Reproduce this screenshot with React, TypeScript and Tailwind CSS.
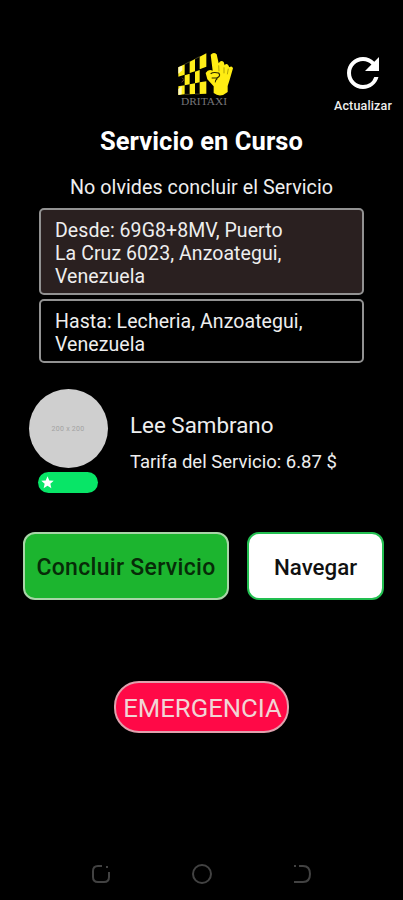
import type { ReactNode } from 'react';
import { MdRefresh, MdStar } from 'react-icons/md';

function Logo() {
  return (
    <svg viewBox="0 0 240 210" className="h-[70px] w-[80px]" aria-label="DRITAXI">
      <path d="M40 67 L59 58 V89 L40 95Z M74 50 L90 42 V79 L74 84Z M104 35 L124 25 V65 L104 73Z" fill="#ffed19" />
      <path d="M59 91 L74 86 V118 L59 121Z M90 80 L104 75 V112 L90 115Z" fill="#ffed19" />
      <path d="M40 124 L59 121 V148 L40 150Z M74 118 L90 115 V147 L74 148Z M104 112 L124 109 V146 L104 147Z" fill="#ffed19" />
      <path d="M40 67 L52 62 V76 L40 86Z M40 132 L50 124 V148 L40 150Z" fill="#fffac2" />
      <path d="M59 58 L74 50 M90 42 L104 35 M59 148 L74 148 M90 147 H104" stroke="#625d2c" strokeWidth="2" />
      <path d="M51 98 L57 104 L50 112" fill="none" stroke="#6b432b" strokeWidth="3" />
      <path d="M137 29 Q146 20 155 28 L161 55 Q168 43 176 51 L179 61 Q184 53 190 61 L193 67 Q201 61 204 70 L194 104 L188 123 V141 Q166 160 146 144 V124 L127 103 L122 84 Q130 71 143 77Z" fill="#ffed13" />
      <path d="M137 86 Q145 80 161 84 Q169 93 155 99 L140 99 M158 99 Q150 106 151 112" fill="none" stroke="#282500" strokeWidth="3.5" />
      <path d="M161 61 L162 79 M177 67 L177 85 M190 71 L187 88" fill="none" stroke="#8a8000" strokeWidth="2" />
      <text x="48" y="181" textLength="138" lengthAdjust="spacingAndGlyphs" fontFamily="Liberation Serif, serif" fontSize="28" fill="#747478">DRITAXI</text>
    </svg>
  );
}

function Address({ children, filled = false }: { children: ReactNode; filled?: boolean }) {
  return (
    <div className={`whitespace-nowrap rounded-[5px] border-2 border-[#929292] px-[14px] text-[19.5px] leading-[23px] tracking-[0.07px] text-[#eeeeee] ${filled ? 'h-[87px] bg-[#2a2020] pt-[9px]' : 'mt-[4px] h-[64px] bg-black pt-[9px]'}`}>
      {children}
    </div>
  );
}

function NavigationBar() {
  return (
    <nav className="mt-auto flex h-[53px] items-center justify-between px-[92px] text-[#424242]">
      <svg className="size-[18px]" viewBox="0 0 18 18" fill="none" stroke="currentColor" strokeWidth="2"><path d="M10 1H6Q1 1 1 6V12Q1 17 6 17H12Q17 17 17 12V7M14 2H16" /></svg>
      <svg className="size-[20px]" viewBox="0 0 20 20" fill="none" stroke="currentColor" strokeWidth="2"><circle cx="10" cy="10" r="9" /></svg>
      <svg className="size-[18px]" viewBox="0 0 18 18" fill="none" stroke="currentColor" strokeWidth="2"><path d="M1 1H3M6 1H10Q17 1 17 9Q17 17 10 17H1" /></svg>
    </nav>
  );
}

export default function App() {
  return (
    <main className="flex h-[900px] w-[403px] flex-col overflow-hidden bg-black font-['Roboto',sans-serif] text-[#eeeeee]">
      <header className="flex h-[122px] pt-[45px]">
        <div className="ml-[165px]"><Logo /></div>
        <button className="ml-auto mr-[8px] flex w-[64px] flex-col items-center pt-[4px]">
          <MdRefresh className="size-[48px] shrink-0 text-white" />
          <span className="text-[12.5px] font-medium leading-[17px] tracking-[0.15px]">Actualizar</span>
        </button>
      </header>
      <h1 className="h-[52px] whitespace-nowrap text-center text-[25.5px] font-bold leading-[39px] tracking-[0.08px] text-white"><span>Servicio en Curso</span></h1>
      <p className="h-[33px] whitespace-nowrap text-center text-[19.7px] leading-[27px] tracking-[0.05px]"><span>No olvides concluir el Servicio</span></p>
      <section className="ml-[39px] mt-[1px] w-[325px]">
        <Address filled>Desde: 69G8+8MV, Puerto<br />La Cruz 6023, Anzoategui,<br />Venezuela</Address>
        <Address>Hasta: Lecheria, Anzoategui,<br />Venezuela</Address>
      </section>
      <section className="mt-[26px] flex h-[105px] pl-[28px]">
        <div className="flex w-[80px] flex-col items-center">
          <div className="flex size-[79px] shrink-0 items-center justify-center rounded-full bg-[#cfcfcf] pt-[2px] text-[7px] tracking-[0.25px] text-[#a2a2a2]">200 x 200</div>
          <div className="mt-[4px] flex h-[21px] w-[60px] items-center rounded-full bg-[#08e567] pl-[2px]"><MdStar className="size-[15px] text-white" /></div>
        </div>
        <div className="ml-[22px] pt-[21px]">
          <div className="h-[40px] whitespace-nowrap text-[22.4px] leading-[30px]"><span>Lee Sambrano</span></div>
          <div className="whitespace-nowrap text-[18.5px] leading-[25px]"><span>Tarifa del Servicio: 6.87 $</span></div>
        </div>
      </section>
      <section className="mt-[38px] flex gap-[18px] pl-[23px]">
        <button className="h-[68px] w-[206px] whitespace-nowrap rounded-[12px] border-2 border-[#a9d5a8] bg-[#1cb52f] pt-[5px] text-[23px] font-medium tracking-[0.3px] text-[#072b08]"><span>Concluir Servicio</span></button>
        <button className="h-[68px] w-[137px] whitespace-nowrap rounded-[12px] border-2 border-[#22be50] bg-white pt-[3px] text-[22.3px] font-medium text-[#111111]"><span>Navegar</span></button>
      </section>
      <button className="ml-[114px] mt-[81px] h-[52px] w-[175px] whitespace-nowrap rounded-[25px] border-2 border-[#dfa1ad] bg-[#ff0947] pl-[7px] pr-[5px] pt-[2px] text-[25.7px] text-[#f1d5d5]"><span>EMERGENCIA</span></button>
      <NavigationBar />
    </main>
  );
}
